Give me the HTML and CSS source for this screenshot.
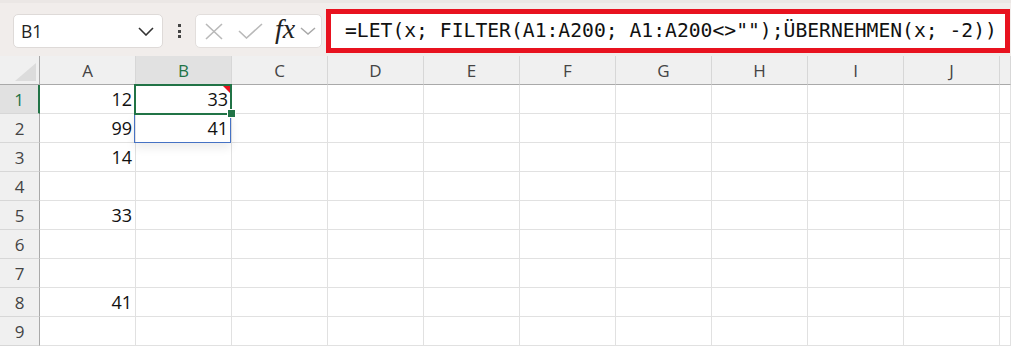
FILE: index.html
```html
<!DOCTYPE html>
<html lang="de">
<head>
    <meta charset="UTF-8">
    <meta name="viewport" content="width=device-width, initial-scale=1.0">
    <title>Formelleiste</title>
    <link rel="stylesheet" href="styles.css">
</head>
<body>

    <!-- Formula bar -->
    <div class="formula-bar">
        <div class="name-box">
            <span>B1</span>
            <svg class="chevron" width="16" height="9" viewBox="0 0 16 9">
                <path d="M1 1 L8 8 L15 1" fill="none" stroke="#333" stroke-width="1.6"/>
            </svg>
        </div>
        <div class="grip">
            <span></span><span></span><span></span>
        </div>
        <div class="fx-box">
            <svg class="icon-x" width="18" height="17" viewBox="0 0 18 17">
                <path d="M1 1 L17 16 M17 1 L1 16" fill="none" stroke="#b9b9b9" stroke-width="1.6"/>
            </svg>
            <svg class="icon-check" width="25" height="16" viewBox="0 0 25 16">
                <path d="M1 8 L8.5 15 L24 1" fill="none" stroke="#b9b9b9" stroke-width="1.6"/>
            </svg>
            <span class="fx">fx</span>
            <svg class="chevron-small" width="16" height="8" viewBox="0 0 16 8">
                <path d="M1 1 L8 7 L15 1" fill="none" stroke="#a8a8a8" stroke-width="1.5"/>
            </svg>
        </div>
        <div class="formula-input">=LET(x; FILTER(A1:A200; A1:A200&lt;&gt;"");ÜBERNEHMEN(x; -2))</div>
    </div>

    <!-- Sheet -->
    <div class="sheet">
        <div class="corner"><span class="corner-triangle"></span></div>
        <div class="col-head">A</div>
        <div class="col-head active">B</div>
        <div class="col-head">C</div>
        <div class="col-head">D</div>
        <div class="col-head">E</div>
        <div class="col-head">F</div>
        <div class="col-head">G</div>
        <div class="col-head">H</div>
        <div class="col-head">I</div>
        <div class="col-head">J</div>
        <div class="col-head"></div>
    </div>

    <script>
        // Cell values, row by row (columns A and B)
        const data = [
            ['12', '33'],
            ['99', '41'],
            ['14', ''],
            ['', ''],
            ['33', ''],
            ['', ''],
            ['', ''],
            ['41', ''],
            ['', '']
        ];

        const sheet = document.querySelector('.sheet');

        data.forEach((row, i) => {
            const head = document.createElement('div');
            head.className = 'row-head' + (i === 0 ? ' active' : '');
            head.textContent = i + 1;
            sheet.appendChild(head);

            for (let c = 0; c < 11; c++) {
                const cell = document.createElement('div');
                cell.className = 'cell';
                cell.textContent = row[c] || '';
                sheet.appendChild(cell);
            }
        });

        // Selection overlays
        const spill = document.createElement('div');
        spill.className = 'spill-range';
        sheet.appendChild(spill);

        const selection = document.createElement('div');
        selection.className = 'selection';
        sheet.appendChild(selection);

        const marker = document.createElement('div');
        marker.className = 'error-marker';
        sheet.appendChild(marker);

        const handle = document.createElement('div');
        handle.className = 'fill-handle';
        sheet.appendChild(handle);
    </script>

</body>
</html>
```

FILE: styles.css
```css
/* General styles */
body {
    margin: 0;
    padding: 0;
    background-color: #ffffff;
    overflow: hidden;
}

/* Formula bar */
.formula-bar {
    height: 56px;
    box-sizing: border-box;
    display: flex;
    align-items: center;
    padding-left: 13px;
    background-color: #f1edeb;
    border-top: 3px solid #ebe7e5;
}

.name-box {
    width: 150px;
    height: 34px;
    box-sizing: border-box;
    margin-top: 3px;
    display: flex;
    align-items: center;
    justify-content: space-between;
    padding: 0 8px 0 7px;
    background-color: white;
    border: 1px solid #dedad8;
    border-radius: 5px;
    font-family: "Open Sans", "Noto Sans", sans-serif;
    font-size: 17.5px;
    color: #222;
}

.grip {
    width: 32px;
    display: flex;
    flex-direction: column;
    align-items: center;
    gap: 2.5px;
    margin-top: 3px;
}

.grip span {
    width: 3px;
    height: 3px;
    background-color: #444;
}

.fx-box {
    width: 127px;
    height: 34px;
    box-sizing: border-box;
    margin-top: 3px;
    display: flex;
    align-items: center;
    padding-left: 9px;
    background-color: white;
    border: 1px solid #e2dedc;
    border-radius: 5px;
}

.icon-x {
    margin-right: 15px;
}

.icon-check {
    margin-right: 12px;
}

.fx {
    font-family: "Liberation Serif", serif;
    font-style: italic;
    font-size: 28px;
    color: #222;
    line-height: 1;
    margin-right: 5px;
    margin-top: -4px;
}

.formula-input {
    width: 684px;
    height: 44px;
    box-sizing: border-box;
    margin-left: 4px;
    margin-top: 2px;
    padding-left: 14px;
    display: flex;
    align-items: center;
    background-color: white;
    border: 5px solid #e8121f;
    font-family: "DejaVu Sans Mono", monospace;
    font-size: 19.7px;
    color: #111;
    white-space: nowrap;
    overflow: hidden;
}

/* Sheet grid */
.sheet {
    position: relative;
    display: grid;
    grid-template-columns: 40px repeat(10, 96px) 1fr;
    grid-auto-rows: 29px;
    font-family: "Open Sans", "Noto Sans", sans-serif;
}

.corner,
.col-head,
.row-head,
.cell {
    box-sizing: border-box;
    display: flex;
    align-items: center;
}

.corner {
    position: relative;
    background-color: #f0f0f0;
    border-right: 1px solid #a9a9a9;
    border-bottom: 1px solid #a9a9a9;
}

.corner-triangle {
    position: absolute;
    right: 3px;
    bottom: 3px;
    width: 21px;
    height: 18px;
    background-color: #dcdcdc;
    clip-path: polygon(100% 0, 100% 100%, 0 100%);
}

.col-head {
    justify-content: center;
    background-color: #f0f0f0;
    border-right: 1px solid #d7d7d7;
    border-bottom: 1px solid #a9a9a9;
    font-size: 17px;
    color: #444;
}

.col-head.active {
    background-color: #e1e1e1;
    color: #217346;
}

.row-head {
    justify-content: center;
    background-color: #f0f0f0;
    border-right: 1px solid #a9a9a9;
    border-bottom: 1px solid #d7d7d7;
    font-size: 17px;
    color: #444;
}

.row-head.active {
    background-color: #e1e1e1;
    color: #217346;
    border-right: 2px solid #217346;
}

.cell {
    justify-content: flex-end;
    padding-right: 3px;
    border-right: 1px solid #e1e1e1;
    border-bottom: 1px solid #e1e1e1;
    font-size: 18px;
    color: #111;
}

/* Selection and spill range */
.selection {
    position: absolute;
    left: 134px;
    top: 28px;
    width: 98px;
    height: 31px;
    box-sizing: border-box;
    border: 2px solid #217346;
}

.spill-range {
    position: absolute;
    left: 134px;
    top: 57px;
    width: 97px;
    height: 30px;
    box-sizing: border-box;
    border: 1px solid #4672c4;
    box-shadow: 0 5px 10px rgba(0, 0, 0, 0.08);
}

.error-marker {
    position: absolute;
    left: 223px;
    top: 30px;
    width: 7px;
    height: 7px;
    background-color: #e8121f;
    clip-path: polygon(0 0, 100% 0, 100% 100%);
}

.fill-handle {
    position: absolute;
    left: 227px;
    top: 53px;
    width: 7px;
    height: 7px;
    background-color: #217346;
    border: 1px solid white;
}
```
